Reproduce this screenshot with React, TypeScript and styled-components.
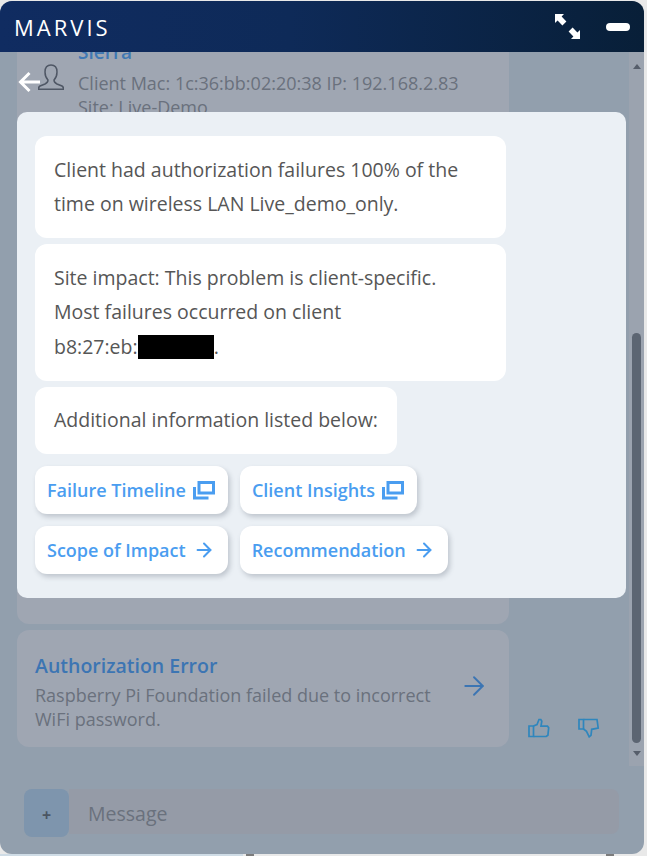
import React from "react";
import styled, { createGlobalStyle } from "styled-components";
import { ArrowRight } from "lucide-react";

const GlobalStyle = createGlobalStyle`
  html, body {
    margin: 0;
    padding: 0;
    background: #e9e9e9;
    overflow: hidden;
  }
  * {
    box-sizing: border-box;
  }
`;

const Window = styled.div`
  width: 644px;
  height: 853px;
  margin-top: 1px;
  border-radius: 12px;
  overflow: hidden;
  display: flex;
  flex-direction: column;
  background: #929fad;
  font-family: "Open Sans", "Liberation Sans", sans-serif;
`;

const Header = styled.header`
  height: 51px;
  flex-shrink: 0;
  display: flex;
  align-items: center;
  justify-content: space-between;
  padding: 0 14px 0 14px;
  background: linear-gradient(90deg, #102c61 0%, #0e2a58 45%, #081f38 100%);
`;

const Brand = styled.div`
  color: #fff;
  font-size: 22px;
  letter-spacing: 3px;
  line-height: 1;
`;

const HeaderIcons = styled.div`
  display: flex;
  align-items: center;
  gap: 26px;
`;

const MinimizeBar = styled.div`
  width: 24px;
  height: 8px;
  border-radius: 4px;
  background: #fff;
`;

const Body = styled.div`
  position: relative;
  flex: 1;
  display: flex;
  flex-direction: column;
  min-height: 0;
`;

const ChatArea = styled.div`
  height: 714px;
  flex-shrink: 0;
  display: flex;
  overflow: hidden;
`;

const Messages = styled.div`
  flex: 1;
  padding-left: 17px;
  display: flex;
  flex-direction: column;
  gap: 6px;
`;

const Row = styled.div`
  display: flex;
  align-items: flex-end;
`;

const ClientCard = styled.div`
  width: 492px;
  height: 572px;
  border-radius: 0 0 12px 12px;
  background: #9fa6b2;
  overflow: hidden;
`;

const ClientRow = styled.div`
  display: flex;
  margin-top: -12px;
  padding-left: 21px;
  gap: 14px;
`;

const PersonIcon = styled.div`
  margin-top: 24px;
  width: 26px;
  display: flex;
`;

const ClientName = styled.div`
  font-size: 19px;
  line-height: 24px;
  font-weight: 600;
  color: #3f78b4;
`;

const ClientText = styled.div`
  font-size: 18px;
  line-height: 24px;
  margin-top: 7px;
  color: #6a717d;
  white-space: nowrap;
`;

const ErrorCard = styled.div`
  width: 492px;
  height: 117px;
  border-radius: 12px;
  background: #9fa6b2;
  display: flex;
  align-items: center;
  justify-content: space-between;
  padding: 7px 20px 0 18px;
`;

const ErrorTitle = styled.div`
  font-size: 19.5px;
  line-height: 25px;
  margin-bottom: 5px;
  font-weight: 600;
  color: #3c75b3;
`;

const ErrorText = styled.div`
  font-size: 18px;
  line-height: 24px;
  width: 410px;
  color: #6a717d;
`;

const ErrorArrow = styled.div`
  display: flex;
  color: #3c75b3;
  margin-top: -12px;
`;

const Feedback = styled.div`
  display: flex;
  gap: 28px;
  margin: 0 0 9px 19px;
  color: #2f86bd;
`;

const ScrollBar = styled.div`
  width: 15px;
  background: #9ba3af;
  display: flex;
  flex-direction: column;
  align-items: center;
  padding: 12px 0 10px;
`;

const ScrollTrack = styled.div`
  flex: 1;
  width: 100%;
  display: flex;
  flex-direction: column;
  justify-content: flex-end;
  padding-bottom: 8px;
`;

const ScrollThumb = styled.div`
  width: 9px;
  height: 410px;
  margin-left: 3px;
  border-radius: 5px;
  background: #5c6572;
`;

const ScrollArrow = styled.div<{ $down?: boolean }>`
  width: 0;
  height: 0;
  border-left: 4.5px solid transparent;
  border-right: 4.5px solid transparent;
  ${({ $down }) =>
    $down ? "border-top: 5px solid #565e6b;" : "border-bottom: 5px solid #565e6b;"}
`;

const Composer = styled.div`
  flex: 1;
  display: flex;
  align-items: flex-start;
  padding: 23px 25px 0 24px;
`;

const PlusButton = styled.div`
  width: 45px;
  height: 48px;
  border-radius: 8px;
  background: #7e95ad;
  color: #4b5563;
  font-size: 16px;
  font-weight: 700;
  display: flex;
  align-items: center;
  justify-content: center;
  padding-top: 4px;
`;

const MessageInput = styled.div`
  flex: 1;
  height: 45px;
  display: flex;
  align-items: center;
  padding: 3px 0 0 19px;
  border-radius: 0 8px 8px 0;
  background: #959ba7;
  color: #6a717d;
  font-size: 19.5px;
`;

const BackArrow = styled.div`
  position: absolute;
  left: 18px;
  top: 19px;
  display: flex;
`;

const Modal = styled.div`
  position: absolute;
  left: 17px;
  top: 60px;
  width: 609px;
  height: 486px;
  border-radius: 10px;
  background: #ebf0f5;
  padding: 24px 18px;
  display: flex;
  flex-direction: column;
  align-items: flex-start;
  gap: 6px;
`;

const Bubble = styled.div<{ $fit?: boolean }>`
  width: ${({ $fit }) => ($fit ? "auto" : "471px")};
  padding: 16.5px 19px;
  border-radius: 12px;
  background: #fff;
  color: #565656;
  font-size: 19.5px;
  line-height: 34.5px;
`;

const Redacted = styled.span`
  display: inline-block;
  width: 76px;
  height: 24px;
  background: #000;
  vertical-align: -5px;
`;

const ActionGrid = styled.div`
  display: flex;
  flex-direction: column;
  gap: 12px;
  margin-top: 6px;
`;

const ActionRow = styled.div`
  display: flex;
  gap: 12px;
`;

const ActionButton = styled.div`
  height: 48px;
  border-radius: 12px;
  background: #fff;
  box-shadow: 2px 3px 5px rgba(90, 100, 115, 0.3);
  color: #4a9df0;
  font-size: 18px;
  font-weight: 600;
  display: flex;
  align-items: center;
  padding: 0 13px 0 12px;
  gap: 7px;
  white-space: nowrap;
`;

const BottomStrip = styled.div`
  position: relative;
  height: 2px;
  background: linear-gradient(90deg, #cfdce6 0, #cfdce6 243px, #e9e9e9 243px);
`;

const StripBump = styled.div<{ $left: number }>`
  position: absolute;
  top: 0;
  left: ${({ $left }) => $left}px;
  width: 8px;
  height: 2px;
  background: #7c7c7c;
`;

const CopyIcon = () => (
  <svg width="22" height="19" viewBox="0 0 22 19" fill="none">
    <rect x="6" y="1.5" width="14.5" height="10.5" stroke="#4a9df0" strokeWidth="3" />
    <path d="M1.5 6v11h14" stroke="#4a9df0" strokeWidth="3" />
  </svg>
);

const ExpandIcon = () => (
  <svg width="25" height="25" viewBox="0 0 25 25" fill="#fff">
    <path d="M0 0h9L6.6 2.6 11.4 7.4 7.4 11.4 2.6 6.6 0 9z" />
    <path d="M25 25h-9l2.4-2.6-4.8-4.8 4-4 4.8 4.8L25 16z" />
  </svg>
);

const PersonOutline = () => (
  <svg width="26" height="26" viewBox="0 0 26 26" fill="none" stroke="#4f5765" strokeWidth="1.5">
    <path d="M13 1c-4 0-6 3-6 7 0 3 1 6 3 8 0 2-1 3-3 4l-5 2c-1 .5-1.5 2-1.5 3.2h25c0-1.2-.5-2.7-1.5-3.2l-5-2c-2-1-3-2-3-4 2-2 3-5 3-8 0-4-2-7-6-7z" />
  </svg>
);

const BackIcon = () => (
  <svg width="22" height="22" viewBox="0 0 22 22" fill="none" stroke="#fff" strokeWidth="3">
    <path d="M22 11H3M11.5 2 2.5 11l9 9" />
  </svg>
);

const ThumbUpIcon = () => (
  <svg width="22" height="20" viewBox="0 0 22 20" fill="none" stroke="currentColor" strokeWidth="1.7">
    <path d="M1 8h4.5v10.5H1z" />
    <path d="M5.5 8 9 6.5 11 1.5h1.8l1 1.7-.8 5h6.5l1.2 1.5-.8 7.5-1.7 1.3H5.5" />
  </svg>
);

const ThumbDownIcon = () => (
  <svg width="22" height="20" viewBox="0 0 22 20" fill="none" stroke="currentColor" strokeWidth="1.7">
    <path d="M1 1.5h4.5V11H1z" />
    <path d="M5.5 1.5H19l1.2 8.5-6.5 1.3-.7 6-1.8 1.5-2.7-5.5L5.5 11" />
  </svg>
);

export default function App() {
  return (
    <>
      <GlobalStyle />
      <Window>
        <Header>
          <Brand>MARVIS</Brand>
          <HeaderIcons>
            <ExpandIcon />
            <MinimizeBar />
          </HeaderIcons>
        </Header>
        <Body>
          <ChatArea>
            <Messages>
              <ClientCard>
                <ClientRow>
                  <PersonIcon>
                    <PersonOutline />
                  </PersonIcon>
                  <div>
                    <ClientName>Sierra</ClientName>
                    <ClientText>
                      Client Mac: 1c:36:bb:02:20:38 IP: 192.168.2.83
                      <br />
                      Site: Live-Demo
                    </ClientText>
                  </div>
                </ClientRow>
              </ClientCard>
              <Row>
                <ErrorCard>
                  <div>
                    <ErrorTitle>Authorization Error</ErrorTitle>
                    <ErrorText>
                      Raspberry Pi Foundation failed due to incorrect WiFi password.
                    </ErrorText>
                  </div>
                  <ErrorArrow>
                    <ArrowRight size={30} strokeWidth={1.5} />
                  </ErrorArrow>
                </ErrorCard>
                <Feedback>
                  <ThumbUpIcon />
                  <ThumbDownIcon />
                </Feedback>
              </Row>
            </Messages>
            <ScrollBar>
              <ScrollArrow />
              <ScrollTrack>
                <ScrollThumb />
              </ScrollTrack>
              <ScrollArrow $down />
            </ScrollBar>
          </ChatArea>
          <Composer>
            <PlusButton>+</PlusButton>
            <MessageInput>Message</MessageInput>
          </Composer>
          <BackArrow>
            <BackIcon />
          </BackArrow>
          <Modal>
            <Bubble>
              Client had authorization failures 100% of the time on wireless LAN Live_demo_only.
            </Bubble>
            <Bubble>
              Site impact: This problem is client-specific.
              <br />
              Most failures occurred on client
              <br />
              b8:27:eb:<Redacted />.
            </Bubble>
            <Bubble $fit>Additional information listed below:</Bubble>
            <ActionGrid>
              <ActionRow>
                <ActionButton>
                  Failure Timeline <CopyIcon />
                </ActionButton>
                <ActionButton>
                  Client Insights <CopyIcon />
                </ActionButton>
              </ActionRow>
              <ActionRow>
                <ActionButton>
                  Scope of Impact <ArrowRight size={22} strokeWidth={2.2} />
                </ActionButton>
                <ActionButton>
                  Recommendation <ArrowRight size={22} strokeWidth={2.2} />
                </ActionButton>
              </ActionRow>
            </ActionGrid>
          </Modal>
        </Body>
      </Window>
      <BottomStrip>
        <StripBump $left={246} />
        <StripBump $left={606} />
      </BottomStrip>
    </>
  );
}
